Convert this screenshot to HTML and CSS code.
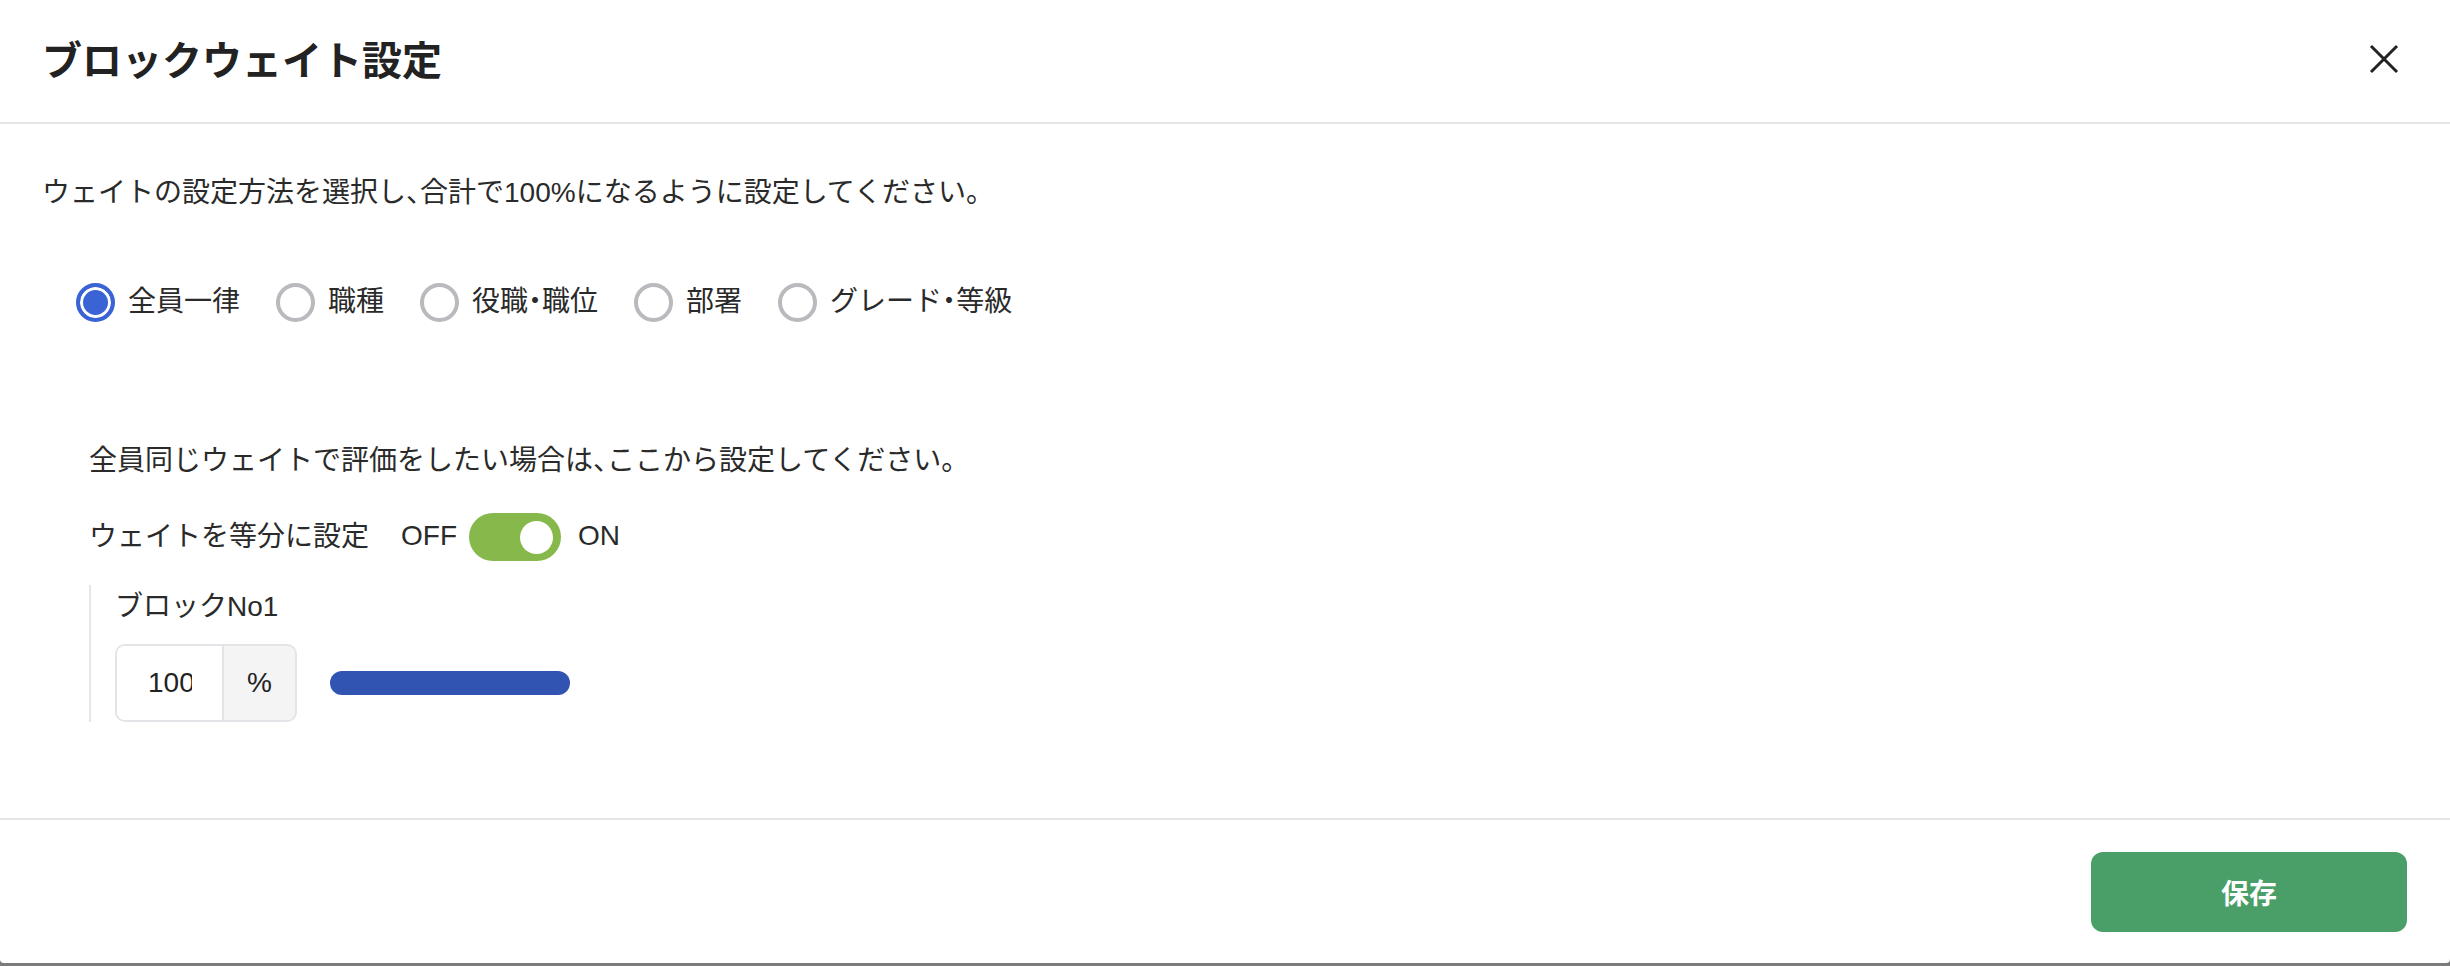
FILE: index.html
```html
<!DOCTYPE html>
<html lang="ja">
<head>
<meta charset="utf-8">
<title>ブロックウェイト設定</title>
<link rel="stylesheet" href="styles.css">
</head>
<body>
<div class="modal">
  <header class="modal-header">
    <h1 class="title">ブロックウェイト設定</h1>
    <button class="close" type="button" aria-label="閉じる">
      <svg width="40" height="40" viewBox="0 0 40 40"><path d="M7 7 L33 33 M33 7 L7 33" stroke="#222" stroke-width="3" fill="none"/></svg>
    </button>
  </header>
  <main class="modal-body">
    <p class="lead">ウェイトの設定方法を選択し<span class="halt">、</span>合計で100%になるように設定してください。</p>
    <div class="radios">
      <label class="radio"><span class="radio-mark checked"></span><span class="radio-label">全員一律</span></label>
      <label class="radio"><span class="radio-mark"></span><span class="radio-label">職種</span></label>
      <label class="radio"><span class="radio-mark"></span><span class="radio-label">役職<span class="halt">・</span>職位</span></label>
      <label class="radio"><span class="radio-mark"></span><span class="radio-label">部署</span></label>
      <label class="radio"><span class="radio-mark"></span><span class="radio-label">グレード<span class="halt">・</span>等級</span></label>
    </div>
    <section class="panel">
      <p class="panel-note">全員同じウェイトで評価をしたい場合は<span class="halt">、</span>ここから設定してください。</p>
      <div class="toggle-row">
        <span class="toggle-label">ウェイトを等分に設定</span>
        <span class="state off">OFF</span>
        <span class="switch"><span class="knob"></span></span>
        <span class="state on">ON</span>
      </div>
      <div class="block">
        <div class="block-name">ブロックNo1</div>
        <div class="block-row">
          <div class="input-group">
            <input class="num" type="text" value="100">
            <span class="unit">%</span>
          </div>
          <div class="bar" style="width:240px"></div>
        </div>
      </div>
    </section>
  </main>
  <footer class="modal-footer">
    <button class="save" type="button">保存</button>
  </footer>
</div>
</body>
</html>
```
FILE: styles.css
```css
html, body {
  margin: 0;
  height: 100%;
}
body {
  background: #7b7b7b;
  font-family: "Liberation Sans", "Noto Sans CJK JP", sans-serif;
  color: #2a2a2a;
}
.modal {
  height: 963px;
  background: #fff;
  display: flex;
  flex-direction: column;
  border-radius: 0 0 4px 4px;
}
.modal-header {
  flex-shrink: 0;
  height: 122px;
  border-bottom: 2px solid #e6e6ea;
  display: flex;
  align-items: center;
  justify-content: space-between;
  padding: 0 46px 0 42px;
}
.title {
  margin: 0;
  font-size: 40px;
  line-height: 48px;
  font-weight: 700;
  color: #222;
}
.close {
  width: 40px;
  height: 40px;
  padding: 0;
  margin-bottom: 5px;
  border: 0;
  background: none;
  display: block;
}
.close svg { display: block; }
.modal-body {
  flex: 1;
  padding: 49px 42px 0;
}
.lead {
  margin: 0;
  font-size: 28px;
  line-height: 40px;
}
.halt { font-feature-settings: "halt"; }
.radios {
  display: flex;
  align-items: center;
  margin-top: 69px;
  padding-left: 34px;
}
.radio {
  display: flex;
  align-items: center;
  margin-right: 36px;
}
.radio-mark {
  width: 39px;
  height: 39px;
  box-sizing: border-box;
  border: 4px solid #b9b9be;
  border-radius: 50%;
  background: #fff;
  margin-right: 13px;
}
.radio-mark.checked {
  border-color: #3a63d6;
  background: #3a63d6;
  box-shadow: inset 0 0 0 3px #fff;
}
.radio-label {
  font-size: 28px;
  line-height: 40px;
}
.panel {
  margin: 119px 0 0 47px;
}
.panel-note {
  margin: 0;
  font-size: 28px;
  line-height: 40px;
}
.toggle-row {
  display: flex;
  align-items: center;
  margin-top: 32px;
  font-size: 28px;
  line-height: 40px;
}
.state { margin-top: -3px; }
.state.off { margin-left: 32px; margin-right: 12px; }
.state.on { margin-left: 17px; }
.switch {
  width: 92px;
  height: 48px;
  border-radius: 24px;
  background: #86b84b;
  display: flex;
  align-items: center;
  justify-content: flex-end;
  padding-right: 8px;
  box-sizing: border-box;
}
.knob {
  width: 33px;
  height: 33px;
  border-radius: 50%;
  background: #fff;
}
.block {
  margin-top: 24px;
  border-left: 2px solid #e6e6ea;
  padding: 2px 0 0 24px;
}
.block-name {
  font-size: 28px;
  line-height: 40px;
}
.block-row {
  display: flex;
  align-items: center;
  margin-top: 17px;
}
.input-group {
  display: flex;
  height: 78px;
  box-sizing: border-box;
  border: 2px solid #e4e4e8;
  border-radius: 10px;
  overflow: hidden;
}
.num {
  width: 107px;
  box-sizing: border-box;
  padding: 0 30px 0 31px;
  border: 0;
  border-right: 2px solid #e4e4e8;
  margin: 0;
  font-family: "Liberation Sans", "Noto Sans CJK JP", sans-serif;
  font-size: 28px;
  color: #222;
  background: #fff;
  outline: none;
}
.unit {
  width: 71px;
  background: #f4f4f5;
  display: flex;
  align-items: center;
  justify-content: center;
  font-size: 28px;
  color: #222;
}
.bar {
  margin-left: 33px;
  height: 24px;
  border-radius: 12px;
  background: #3153b1;
}
.modal-footer {
  flex-shrink: 0;
  height: 143px;
  border-top: 2px solid #e6e6ea;
  display: flex;
  align-items: center;
  justify-content: flex-end;
  padding-right: 43px;
}
.save {
  width: 316px;
  height: 80px;
  border: 0;
  border-radius: 12px;
  background: #4a9e67;
  color: #fff;
  font-family: "Liberation Sans", "Noto Sans CJK JP", sans-serif;
  font-size: 28px;
  font-weight: 700;
}
```
